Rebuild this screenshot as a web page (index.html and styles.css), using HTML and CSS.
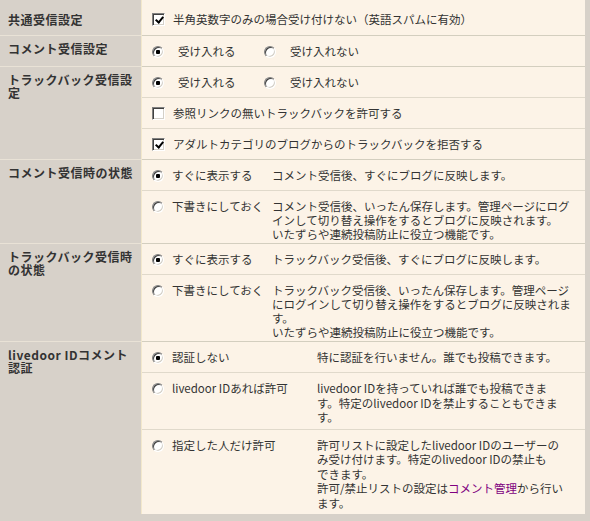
FILE: index.html
```html
<!DOCTYPE html>
<html lang="ja">
<head>
  <meta charset="UTF-8" />
  <title>コメント・トラックバック設定</title>
  <link rel="stylesheet" href="styles.css">
</head>
<body>

  <table class="settings">
    <tr>
      <th>共通受信設定</th>
      <td><label><input type="checkbox" checked>半角英数字のみの場合受け付けない（英語スパムに有効）</label></td>
    </tr>
    <tr>
      <th>コメント受信設定</th>
      <td class="pair">
        <label><input type="radio" name="comment" checked>受け入れる</label>
        <label><input type="radio" name="comment">受け入れない</label>
      </td>
    </tr>
    <tr>
      <th rowspan="3">トラックバック受信設定</th>
      <td class="pair">
        <label><input type="radio" name="tb" checked>受け入れる</label>
        <label><input type="radio" name="tb">受け入れない</label>
      </td>
    </tr>
    <tr class="sub">
      <td><label><input type="checkbox">参照リンクの無いトラックバックを許可する</label></td>
    </tr>
    <tr class="sub">
      <td><label><input type="checkbox" checked>アダルトカテゴリのブログからのトラックバックを拒否する</label></td>
    </tr>

    <tr>
      <th rowspan="2">コメント受信時の状態</th>
      <td>
        <div class="choice">
          <label><input type="radio" name="cstate" checked>すぐに表示する</label>
          <p>コメント受信後、すぐにブログに反映します。</p>
        </div>
      </td>
    </tr>
    <tr class="sub">
      <td>
        <div class="choice">
          <label><input type="radio" name="cstate">下書きにしておく</label>
          <p>コメント受信後、いったん保存します。管理ページにログインして切り替え操作をするとブログに反映されます。<br>いたずらや連続投稿防止に役立つ機能です。</p>
        </div>
      </td>
    </tr>

    <tr>
      <th rowspan="2">トラックバック受信時の状態</th>
      <td>
        <div class="choice">
          <label><input type="radio" name="tstate" checked>すぐに表示する</label>
          <p>トラックバック受信後、すぐにブログに反映します。</p>
        </div>
      </td>
    </tr>
    <tr class="sub">
      <td>
        <div class="choice">
          <label><input type="radio" name="tstate">下書きにしておく</label>
          <p>トラックバック受信後、いったん保存します。管理ページにログインして切り替え操作をするとブログに反映されます。<br>いたずらや連続投稿防止に役立つ機能です。</p>
        </div>
      </td>
    </tr>

    <tr>
      <th rowspan="3">livedoor IDコメント認証</th>
      <td>
        <div class="choice wide">
          <label><input type="radio" name="auth" checked>認証しない</label>
          <p>特に認証を行いません。誰でも投稿できます。</p>
        </div>
      </td>
    </tr>
    <tr class="sub">
      <td>
        <div class="choice wide">
          <label><input type="radio" name="auth">livedoor IDあれば許可</label>
          <p>livedoor IDを持っていれば誰でも投稿できま<br>す。特定のlivedoor IDを禁止することもできま<br>す。</p>
        </div>
      </td>
    </tr>
    <tr class="sub">
      <td>
        <div class="choice wide">
          <label><input type="radio" name="auth">指定した人だけ許可</label>
          <p>許可リストに設定したlivedoor IDのユーザーの<br>み受け付けます。特定のlivedoor IDの禁止も<br>できます。<br>許可/禁止リストの設定は<a href="#">コメント管理</a>から行い<br>ます。</p>
        </div>
      </td>
    </tr>
  </table>

</body>
</html>
```

FILE: styles.css
```css
body {
  margin: 0;
  background-color: #d7d1c9;
  font-family: "Noto Sans CJK JP", sans-serif;
  font-size: 11.5px;
  color: #333;
}

.settings {
  width: 585px;
  border-spacing: 0;
}

.settings th {
  width: 129px;
  padding: 6px 4px 0 8px;
  border-top: 1px solid #e9e2d6;
  border-right: 1px solid #f3e8cc;
  text-align: left;
  vertical-align: top;
  font-size: 12px;
  line-height: 13px;
  letter-spacing: 0.5px;
  color: #333;
}

.settings td {
  background-color: #fcf3e7;
  border-top: 1px solid #d3cebf;
  padding: 6px 8px 6px 10px;
  line-height: 18px;
  vertical-align: top;
}

.settings tr:first-child th {
  border-top: none;
  padding-top: 13px;
}

.settings tr:first-child td {
  border-top: none;
  padding-top: 10px;
  padding-bottom: 7px;
}

.settings .sub td {
  border-top-color: #e0d9cb;
}

input[type="radio"],
input[type="checkbox"] {
  appearance: none;
  box-sizing: border-box;
  width: 12px;
  height: 12px;
  margin: 0 8px 0 0;
  background-color: #fff;
  border: 1px solid;
  border-color: #808080 #fff #fff #808080;
  box-shadow: inset 1px 1px #404040, inset -1px -1px #d4d0c8;
  vertical-align: -2px;
}

input[type="radio"] {
  border-radius: 50%;
}

input[type="radio"]:checked {
  background: radial-gradient(circle, #000 0 2px, #fff 2.5px);
}

input[type="checkbox"] {
  width: 13px;
  height: 13px;
}

input[type="checkbox"]:checked::before {
  content: "";
  display: block;
  width: 3px;
  height: 6px;
  margin: 1px 0 0 3.5px;
  border: solid #000;
  border-width: 0 2px 2px 0;
  transform: rotate(40deg);
}

.pair input {
  margin-right: 14px;
}

.pair label + label {
  margin-left: 26px;
}

.choice {
  display: grid;
  grid-template-columns: 120px 1fr;
}

.choice.wide {
  grid-template-columns: 165px 1fr;
}

.choice p {
  margin: 2px 0 -4px;
  line-height: 14px;
}

.choice.wide p {
  margin-bottom: -2px;
  line-height: 14.5px;
}

a {
  color: #800080;
  text-decoration: none;
}
```
